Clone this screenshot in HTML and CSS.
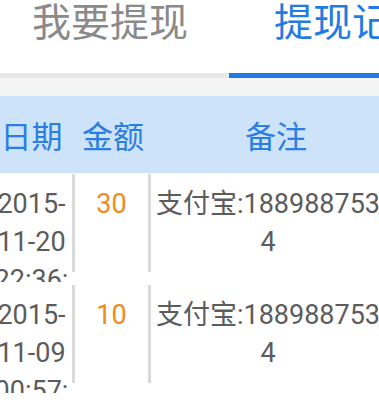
FILE: index.html
```html
<!DOCTYPE html>
<html>
<head>
    <meta charset="utf-8">
    <title>提现记录</title>
    <meta name="viewport" content="width=device-width, initial-scale=1.0">
    <link rel="stylesheet" href="styles.css">
</head>
<body>
<main class="page">
    <nav class="tabs">
        <div class="tab tab-first">我要提现</div>
        <div class="tab tab-second tab-active">提现记录</div>
    </nav>

    <div class="spacer"></div>

    <section class="records">
        <div class="records-head">
            <div class="col-date">日期</div>
            <div class="col-amount">金额</div>
            <div class="col-note">备注</div>
        </div>

        <div class="record">
            <div class="col-date">2015-11-20 22:36:18</div>
            <div class="col-amount cell">30</div>
            <div class="col-note cell">支付宝:1889887534</div>
        </div>

        <div class="record">
            <div class="col-date">2015-11-09 00:57:42</div>
            <div class="col-amount cell">10</div>
            <div class="col-note cell">支付宝:1889887534</div>
        </div>
    </section>
</main>
</body>
</html>
```

FILE: styles.css
```css
body {
    margin: 0;
    overflow: hidden;
    background-color: #fff;
    font-family: Roboto, "Noto Sans CJK SC", sans-serif;
}

.page {
    width: 484px;
    margin-left: -9px;
}

/* tabs */
.tabs {
    display: flex;
}

.tab {
    height: 73px;
    font-size: 39px;
    line-height: 46px;
    text-align: center;
    color: #8a8a8a;
    border-bottom: 5px solid #e8e8e8;
}

.tab-first {
    width: 238px;
}

.tab-second {
    flex: 1;
}

.tab-active {
    color: #1f7ce3;
    border-bottom-color: #1e7be6;
}

.spacer {
    height: 18px;
    background-color: #f4f4f4;
}

/* records table */
.records {
    width: 410px;
}

.records-head,
.record {
    display: flex;
    align-items: flex-start;
}

.col-date {
    width: 81px;
    flex: none;
    text-align: center;
}

.col-amount {
    width: 76px;
    flex: none;
    text-align: center;
}

.col-note {
    flex: 1;
    text-align: center;
}

.records-head {
    height: 77px;
    align-items: center;
    background-color: #cce3fa;
    color: #2a7de1;
    font-size: 31px;
    margin-bottom: 1px;
}

.records-head .col-amount {
    padding-left: 3px;
}

.record {
    height: 108px;
    margin-bottom: 3px;
    font-size: 27px;
    line-height: 38px;
    color: #5c5c5c;
}

.record .col-date {
    height: 108px;
    padding-top: 11px;
    box-sizing: border-box;
    overflow: hidden;
    overflow-wrap: anywhere;
}

.cell {
    height: 98px;
    padding-top: 11px;
    box-sizing: border-box;
    border-left: 3px solid #d9d9d9;
}

.record .col-amount {
    color: #f08a1d;
}

.record .col-note {
    flex: none;
    width: 236px;
    padding-left: 1px;
    word-break: break-all;
}
```
